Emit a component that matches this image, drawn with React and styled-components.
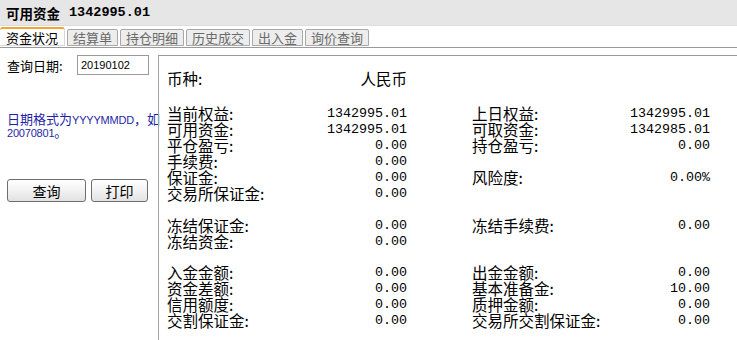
import styled, { createGlobalStyle } from "styled-components";

const GlobalStyle = createGlobalStyle`
    html, body {
        margin: 0;
        padding: 0;
        background: #ffffff;
    }
    body {
        font-family: "Noto Sans CJK SC", "Liberation Sans", sans-serif;
        color: #000000;
    }
`;

const tabs = ["资金状况", "结算单", "持仓明细", "历史成交", "出入金", "询价查询"];

const sections = [
    {
        gap: 0,
        rows: [[["币种", "人民币", true], null]],
    },
    {
        gap: 19,
        rows: [
            [["当前权益", "1342995.01"], ["上日权益", "1342995.01"]],
            [["可用资金", "1342995.01"], ["可取资金", "1342985.01"]],
            [["平仓盈亏", "0.00"], ["持仓盈亏", "0.00"]],
            [["手续费", "0.00"], null],
            [["保证金", "0.00"], ["风险度", "0.00%"]],
            [["交易所保证金", "0.00"], null],
        ],
    },
    {
        gap: 16,
        rows: [
            [["冻结保证金", "0.00"], ["冻结手续费", "0.00"]],
            [["冻结资金", "0.00"], null],
        ],
    },
    {
        gap: 15,
        rows: [
            [["入金金额", "0.00"], ["出金金额", "0.00"]],
            [["资金差额", "0.00"], ["基本准备金", "10.00"]],
            [["信用额度", "0.00"], ["质押金额", "0.00"]],
            [["交割保证金", "0.00"], ["交易所交割保证金", "0.00"]],
        ],
    },
];

const App = () => {
    return (
        <Page>
            <GlobalStyle />
            <TitleBar>
                <TitleLabel>可用资金</TitleLabel>
                <TitleAmount>1342995.01</TitleAmount>
            </TitleBar>
            <TabBar>
                {tabs.map((t, i) => (
                    <Tab key={t} $active={i === 0}>
                        {t}
                    </Tab>
                ))}
            </TabBar>
            <Body>
                <Side>
                    <DateRow>
                        <DateLabel>查询日期:</DateLabel>
                        <DateInput defaultValue="20190102" />
                    </DateRow>
                    <Hint>
                        <HintLine>
                            日期格式为<Latin>YYYYMMDD</Latin>，如
                        </HintLine>
                        <HintLine>
                            <Latin>20070801</Latin>。
                        </HintLine>
                    </Hint>
                    <Buttons>
                        <Button $w={79}>查询</Button>
                        <Button $w={57}>打印</Button>
                    </Buttons>
                </Side>
                <Panel>
                    {sections.map((s, si) => (
                        <Section key={si} $gap={s.gap}>
                            {s.rows.map((row, ri) =>
                                row.map((cell, ci) =>
                                    cell ? (
                                        <Cell key={`${ri}-${ci}`}>
                                            <Label>{cell[0]}:</Label>
                                            <Value $cjk={cell[2]}>
                                                {cell[1]}
                                            </Value>
                                        </Cell>
                                    ) : (
                                        <Cell key={`${ri}-${ci}`} />
                                    )
                                )
                            )}
                        </Section>
                    ))}
                </Panel>
            </Body>
        </Page>
    );
};

const Page = styled.div`
    width: 737px;
    height: 340px;
    overflow: hidden;
    display: flex;
    flex-direction: column;
`;

const TitleBar = styled.div`
    height: 25px;
    background: #e6e6e6;
    border-bottom: 1px solid #dedede;
    display: flex;
    align-items: center;
    padding-left: 6px;
    gap: 9px;
`;

const TitleLabel = styled.span`
    font-size: 13.5px;
    font-family: "Noto Sans CJK SC", sans-serif;
    font-weight: bold;
`;

const TitleAmount = styled.span`
    font-size: 13.5px;
    font-family: "Liberation Mono", monospace;
    font-weight: bold;
`;

const TabBar = styled.div`
    height: 20px;
    display: flex;
    align-items: flex-end;
    gap: 2px;
    padding-bottom: 1px;
    border-bottom: 1px solid #9a9a9a;
`;

const Tab = styled.div`
    box-sizing: border-box;
    height: ${(p) => (p.$active ? "19px" : "17px")};
    padding: 0 ${(p) => (p.$active ? "6px" : "5px")};
    display: flex;
    align-items: center;
    font-size: 13px;
    line-height: 1;
    color: ${(p) => (p.$active ? "#000000" : "#6a6a6a")};
    background: ${(p) => (p.$active ? "#ffffff" : "#ededed")};
    border: 1px solid ${(p) => (p.$active ? "#d8d8d8" : "#a8a8a8")};
    border-top: ${(p) => (p.$active ? "2px solid #f2a33a" : "1px solid #a8a8a8")};
    border-radius: ${(p) => (p.$active ? "3px 3px 0 0" : "2px 2px 0 0")};
    ${(p) => p.$active && "border-left: none;"}
`;

const Body = styled.div`
    flex: 1;
    display: flex;
    padding-top: 7px;
`;

const Side = styled.div`
    width: 151px;
    padding-left: 7px;
    display: flex;
    flex-direction: column;
`;

const DateRow = styled.div`
    display: flex;
    align-items: center;
    height: 20px;
`;

const DateLabel = styled.span`
    width: 70px;
    font-size: 13px;
`;

const DateInput = styled.input`
    box-sizing: border-box;
    width: 72px;
    height: 20px;
    margin: 0;
    padding: 0 3px;
    border: 1px solid #9a9a9a;
    font-family: "Liberation Sans", sans-serif;
    font-size: 11px;
    color: #000000;
    outline: none;
`;

const Hint = styled.div`
    margin-top: 38px;
    font-size: 13px;
    line-height: 12px;
    color: #1f1fa8;
`;

const HintLine = styled.div`
    white-space: nowrap;
`;

const Latin = styled.span`
    font-family: "Liberation Sans", sans-serif;
    font-size: 11px;
    letter-spacing: -0.2px;
`;

const Buttons = styled.div`
    margin-top: 40px;
    display: flex;
    gap: 5px;
`;

const Button = styled.button`
    box-sizing: border-box;
    width: ${(p) => p.$w}px;
    height: 23px;
    padding: 0;
    border: 1px solid #6e6e6e;
    border-radius: 3px;
    background: linear-gradient(#ffffff, #f2f2f2 50%, #e2e2e2);
    font-family: "Noto Sans CJK SC", sans-serif;
    font-size: 14px;
    color: #000000;
`;

const Panel = styled.div`
    flex: 1;
    border-top: 1px solid #9a9a9a;
    border-left: 1px solid #9aa4b4;
    padding: 14px 0 0 8px;
`;

const Section = styled.div`
    margin-top: ${(p) => p.$gap}px;
    display: grid;
    grid-template-columns: 240px 238px;
    column-gap: 65px;
    grid-auto-rows: 16px;
`;

const Cell = styled.div`
    display: flex;
    justify-content: space-between;
    align-items: center;
    white-space: nowrap;
`;

const Label = styled.span`
    font-size: 15.5px;
    line-height: 16px;
`;

const Value = styled.span`
    font-family: ${(p) =>
        p.$cjk ? '"Noto Sans CJK SC", sans-serif' : '"Liberation Mono", monospace'};
    font-size: ${(p) => (p.$cjk ? "15.5px" : "13.33px")};
    line-height: 16px;
    padding-top: ${(p) => (p.$cjk ? "0" : "2px")};
`;

export default App;
